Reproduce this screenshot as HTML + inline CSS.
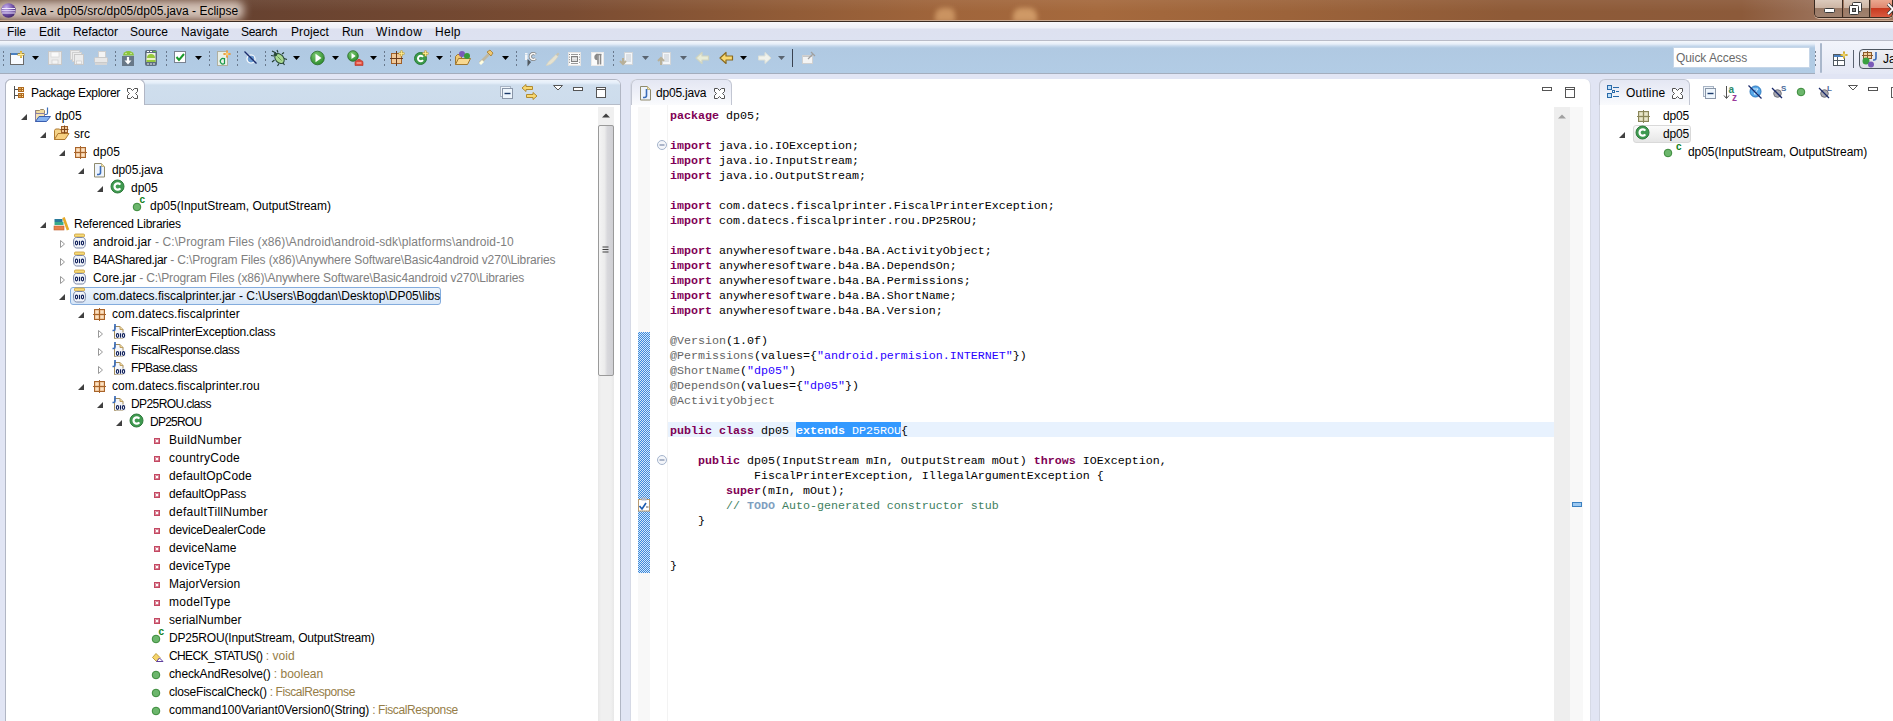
<!DOCTYPE html><html><head><meta charset="utf-8"><style>
*{margin:0;padding:0;box-sizing:border-box}
html,body{width:1893px;height:721px;overflow:hidden;background:#e1e5f4;font-family:"Liberation Sans",sans-serif;font-size:12px;color:#000}
.a{position:absolute}
.t{position:absolute;white-space:pre;line-height:18px;height:18px}
.c{position:absolute;white-space:pre;font-family:"Liberation Mono",monospace;font-size:11.665px;line-height:15px;height:15px;color:#000}
.k{color:#7f0055;font-weight:bold}
.s{color:#2a00ff}
.an{color:#646464}
.cm{color:#3f7f5f}
.td{color:#7f9fbf;font-weight:bold}
.q{color:#808080}
.r{color:#957d47}
svg{position:absolute;overflow:visible}
</style></head><body>

<div class="a" style="left:0;top:0;width:1893px;height:22px;background:linear-gradient(90deg,#5e3e2c 0%,#674230 13%,#7a4c32 30%,#925c37 42%,#a0653b 50%,#a5693d 58%,#9c633a 68%,#8e5a37 80%,#8c5a3a 92%,#9a7058 96%,#a07a62 100%)"></div>
<div class="a" style="left:0;top:0;width:1893px;height:12px;background:linear-gradient(rgba(255,255,255,0.06),rgba(255,255,255,0))"></div>
<div class="a" style="left:-6px;top:1px;width:250px;height:19px;background:rgba(236,222,212,0.82);filter:blur(4px);border-radius:8px"></div>
<div class="a" style="left:1013px;top:8px;width:24px;height:14px;background:rgba(236,186,130,0.6);filter:blur(2.5px);border-radius:8px 8px 0 0"></div>
<div class="a" style="left:935px;top:8px;width:20px;height:14px;background:rgba(236,186,130,0.55);filter:blur(2.5px);border-radius:8px 6px 0 0"></div>
<div class="a" style="left:0;top:20px;width:1893px;height:1px;background:#c8a890"></div>
<div class="a" style="left:0;top:21px;width:1893px;height:1px;background:#3b2b22"></div>
<svg style="left:1px;top:3px" width="16" height="16" viewBox="0 0 16 16"><defs><radialGradient id="eg" cx="0.35" cy="0.3" r="0.8"><stop offset="0" stop-color="#c8b0f0"/><stop offset="0.6" stop-color="#6a4aa0"/><stop offset="1" stop-color="#3a2060"/></radialGradient></defs><circle cx="7.5" cy="7.5" r="7.3" fill="url(#eg)"/><path d="M1 5.5h13M0.5 7.8h14M1 10h13" stroke="#f0e8ff" stroke-width="1.1"/></svg>
<div class="t" style="left:21px;top:2px;letter-spacing:0.009px;">Java - dp05/src/dp05/dp05.java - Eclipse</div>
<div class="a" style="left:1814px;top:0px;width:79px;height:18px;border:1px solid #3a2a20;border-top:none;border-radius:0 0 5px 5px;overflow:hidden;box-shadow:0 1px 0 rgba(255,230,210,0.6)"><div class="a" style="left:0;top:0;width:28px;height:17px;background:linear-gradient(#dccabc 0,#cdb5a4 45%,#9a7a66 50%,#a08270 100%);border-right:1px solid #3a2a20"></div><div class="a" style="left:29px;top:0;width:26px;height:17px;background:linear-gradient(#dccabc 0,#cdb5a4 45%,#9a7a66 50%,#a08270 100%);border-right:1px solid #3a2a20"></div><div class="a" style="left:56px;top:0;width:30px;height:17px;background:linear-gradient(#eaa890 0,#e08870 45%,#c83a20 50%,#d85a40 100%)"></div></div><svg style="left:1824px;top:8px" width="12" height="6" viewBox="0 0 12 6"><rect x="0.5" y="0.5" width="10" height="4" rx="1" fill="#fff" stroke="#3a3a3a"/></svg><svg style="left:1849px;top:2px" width="14" height="13" viewBox="0 0 14 13"><rect x="3.5" y="0.5" width="9" height="9" rx="1" fill="#fff" stroke="#3a3a3a"/><rect x="0.5" y="3.5" width="9" height="9" rx="1" fill="#fff" stroke="#3a3a3a"/><rect x="3.5" y="6.5" width="3" height="3" fill="#888" stroke="#3a3a3a"/></svg><svg style="left:1888px;top:3px" width="6" height="12" viewBox="0 0 6 12"><path d="M0 1l5 5l-5 5" stroke="#3a3a3a" stroke-width="3.4" fill="none"/><path d="M0 1l5 5l-5 5" stroke="#fff" stroke-width="1.8" fill="none"/></svg>
<div class="a" style="left:0;top:22px;width:1893px;height:18px;background:linear-gradient(#f7f8fc 0,#eef0f8 6px,#dde1f0 7px,#dde2f1 100%)"></div>
<div class="a" style="left:0;top:40px;width:1893px;height:1px;background:#b9bcc8"></div>
<div class="t" style="left:7px;top:23px;letter-spacing:-0.115px;">File</div>
<div class="t" style="left:39px;top:23px;letter-spacing:0.105px;">Edit</div>
<div class="t" style="left:73px;top:23px;letter-spacing:-0.066px;">Refactor</div>
<div class="t" style="left:130px;top:23px;letter-spacing:-0.005px;">Source</div>
<div class="t" style="left:181px;top:23px;letter-spacing:0.104px;">Navigate</div>
<div class="t" style="left:241px;top:23px;letter-spacing:-0.305px;">Search</div>
<div class="t" style="left:291px;top:23px;letter-spacing:0.091px;">Project</div>
<div class="t" style="left:342px;top:23px;letter-spacing:-0.160px;">Run</div>
<div class="t" style="left:376px;top:23px;letter-spacing:0.662px;">Window</div>
<div class="t" style="left:435px;top:23px;letter-spacing:0.271px;">Help</div>
<div class="a" style="left:0;top:41px;width:1815px;height:32px;background:linear-gradient(#f4f7fc 0,#e6eef8 3px,#c6d8ec 5px,#b0c9e2 7px,#b2cce5 100%)"></div>
<div class="a" style="left:0;top:73px;width:1815px;height:1px;background:#a3adbd"></div>
<div class="a" style="left:1815px;top:41px;width:78px;height:33px;background:linear-gradient(#f2f4fb,#e4e8f5)"></div>
<div class="a" style="left:1820px;top:43px;width:2px;height:30px;background:#a9b7cb;border-radius:1px"></div>
<svg style="left:2px;top:50px" width="3" height="17" viewBox="0 0 3 17"><rect x="1" y="1" width="1" height="2" fill="#4a5668" opacity="0.7"/><rect x="1" y="5" width="1" height="2" fill="#4a5668" opacity="0.7"/><rect x="1" y="9" width="1" height="2" fill="#4a5668" opacity="0.7"/><rect x="1" y="14" width="1" height="2" fill="#4a5668" opacity="0.7"/></svg>
<svg style="left:114px;top:50px" width="3" height="17" viewBox="0 0 3 17"><rect x="1" y="1" width="1" height="2" fill="#4a5668" opacity="0.7"/><rect x="1" y="5" width="1" height="2" fill="#4a5668" opacity="0.7"/><rect x="1" y="9" width="1" height="2" fill="#4a5668" opacity="0.7"/><rect x="1" y="14" width="1" height="2" fill="#4a5668" opacity="0.7"/></svg>
<svg style="left:165px;top:50px" width="3" height="17" viewBox="0 0 3 17"><rect x="1" y="1" width="1" height="2" fill="#4a5668" opacity="0.7"/><rect x="1" y="5" width="1" height="2" fill="#4a5668" opacity="0.7"/><rect x="1" y="9" width="1" height="2" fill="#4a5668" opacity="0.7"/><rect x="1" y="14" width="1" height="2" fill="#4a5668" opacity="0.7"/></svg>
<svg style="left:208px;top:50px" width="3" height="17" viewBox="0 0 3 17"><rect x="1" y="1" width="1" height="2" fill="#4a5668" opacity="0.7"/><rect x="1" y="5" width="1" height="2" fill="#4a5668" opacity="0.7"/><rect x="1" y="9" width="1" height="2" fill="#4a5668" opacity="0.7"/><rect x="1" y="14" width="1" height="2" fill="#4a5668" opacity="0.7"/></svg>
<svg style="left:236px;top:50px" width="3" height="17" viewBox="0 0 3 17"><rect x="1" y="1" width="1" height="2" fill="#4a5668" opacity="0.7"/><rect x="1" y="5" width="1" height="2" fill="#4a5668" opacity="0.7"/><rect x="1" y="9" width="1" height="2" fill="#4a5668" opacity="0.7"/><rect x="1" y="14" width="1" height="2" fill="#4a5668" opacity="0.7"/></svg>
<svg style="left:264px;top:50px" width="3" height="17" viewBox="0 0 3 17"><rect x="1" y="1" width="1" height="2" fill="#4a5668" opacity="0.7"/><rect x="1" y="5" width="1" height="2" fill="#4a5668" opacity="0.7"/><rect x="1" y="9" width="1" height="2" fill="#4a5668" opacity="0.7"/><rect x="1" y="14" width="1" height="2" fill="#4a5668" opacity="0.7"/></svg>
<svg style="left:383px;top:50px" width="3" height="17" viewBox="0 0 3 17"><rect x="1" y="1" width="1" height="2" fill="#4a5668" opacity="0.7"/><rect x="1" y="5" width="1" height="2" fill="#4a5668" opacity="0.7"/><rect x="1" y="9" width="1" height="2" fill="#4a5668" opacity="0.7"/><rect x="1" y="14" width="1" height="2" fill="#4a5668" opacity="0.7"/></svg>
<svg style="left:449px;top:50px" width="3" height="17" viewBox="0 0 3 17"><rect x="1" y="1" width="1" height="2" fill="#4a5668" opacity="0.7"/><rect x="1" y="5" width="1" height="2" fill="#4a5668" opacity="0.7"/><rect x="1" y="9" width="1" height="2" fill="#4a5668" opacity="0.7"/><rect x="1" y="14" width="1" height="2" fill="#4a5668" opacity="0.7"/></svg>
<svg style="left:515px;top:50px" width="3" height="17" viewBox="0 0 3 17"><rect x="1" y="1" width="1" height="2" fill="#4a5668" opacity="0.7"/><rect x="1" y="5" width="1" height="2" fill="#4a5668" opacity="0.7"/><rect x="1" y="9" width="1" height="2" fill="#4a5668" opacity="0.7"/><rect x="1" y="14" width="1" height="2" fill="#4a5668" opacity="0.7"/></svg>
<svg style="left:612px;top:50px" width="3" height="17" viewBox="0 0 3 17"><rect x="1" y="1" width="1" height="2" fill="#4a5668" opacity="0.7"/><rect x="1" y="5" width="1" height="2" fill="#4a5668" opacity="0.7"/><rect x="1" y="9" width="1" height="2" fill="#4a5668" opacity="0.7"/><rect x="1" y="14" width="1" height="2" fill="#4a5668" opacity="0.7"/></svg>
<svg style="left:1814px;top:50px" width="3" height="17" viewBox="0 0 3 17"><rect x="1" y="1" width="1" height="2" fill="#4a5668" opacity="0.7"/><rect x="1" y="5" width="1" height="2" fill="#4a5668" opacity="0.7"/><rect x="1" y="9" width="1" height="2" fill="#4a5668" opacity="0.7"/><rect x="1" y="14" width="1" height="2" fill="#4a5668" opacity="0.7"/></svg>
<svg style="left:32px;top:56px" width="8" height="5" viewBox="0 0 8 5"><path d="M0 0h7l-3.5 4z" fill="#000"/></svg>
<svg style="left:195px;top:56px" width="8" height="5" viewBox="0 0 8 5"><path d="M0 0h7l-3.5 4z" fill="#000"/></svg>
<svg style="left:293px;top:56px" width="8" height="5" viewBox="0 0 8 5"><path d="M0 0h7l-3.5 4z" fill="#000"/></svg>
<svg style="left:332px;top:56px" width="8" height="5" viewBox="0 0 8 5"><path d="M0 0h7l-3.5 4z" fill="#000"/></svg>
<svg style="left:370px;top:56px" width="8" height="5" viewBox="0 0 8 5"><path d="M0 0h7l-3.5 4z" fill="#000"/></svg>
<svg style="left:436px;top:56px" width="8" height="5" viewBox="0 0 8 5"><path d="M0 0h7l-3.5 4z" fill="#000"/></svg>
<svg style="left:502px;top:56px" width="8" height="5" viewBox="0 0 8 5"><path d="M0 0h7l-3.5 4z" fill="#000"/></svg>
<svg style="left:642px;top:56px" width="8" height="5" viewBox="0 0 8 5"><path d="M0 0h7l-3.5 4z" fill="#5a6470"/></svg>
<svg style="left:680px;top:56px" width="8" height="5" viewBox="0 0 8 5"><path d="M0 0h7l-3.5 4z" fill="#5a6470"/></svg>
<svg style="left:740px;top:56px" width="8" height="5" viewBox="0 0 8 5"><path d="M0 0h7l-3.5 4z" fill="#000"/></svg>
<svg style="left:778px;top:56px" width="8" height="5" viewBox="0 0 8 5"><path d="M0 0h7l-3.5 4z" fill="#5a6470"/></svg>
<svg style="left:10px;top:50px" width="16" height="16" viewBox="0 0 16 16"><rect x="0.5" y="3.5" width="13" height="11" fill="#f8fbff" stroke="#6a6a6a"/><rect x="1" y="3" width="7" height="2" fill="#4a80c0"/><path d="M11 1v7M7.5 4.5h7" stroke="#c89a20" stroke-width="2"/><path d="M11 1.5v6M8 4.5h6" stroke="#fff0a0" stroke-width="1"/></svg>
<svg style="left:48px;top:50px" width="16" height="16" viewBox="0 0 16 16"><rect x="0.5" y="1.5" width="13" height="13" fill="#ececec" stroke="#c8c8c8"/><rect x="3" y="2" width="8" height="5" fill="#fafafa" stroke="#d0d0d0" stroke-width="0.6"/><rect x="4" y="10" width="6" height="4" fill="#f4f4f4" stroke="#c8c8c8" stroke-width="0.6"/></svg>
<svg style="left:70px;top:50px" width="16" height="16" viewBox="0 0 16 16"><rect x="0.5" y="0.5" width="9" height="9" fill="#ececec" stroke="#d0d0d0"/><rect x="2.5" y="2.5" width="9" height="9" fill="#ececec" stroke="#d0d0d0"/><rect x="4.5" y="4.5" width="9" height="10" fill="#ececec" stroke="#c8c8c8"/><rect x="6.5" y="11" width="5" height="3" fill="#f6f6f6" stroke="#c8c8c8" stroke-width="0.6"/></svg>
<svg style="left:94px;top:50px" width="16" height="16" viewBox="0 0 16 16"><rect x="4.5" y="1.5" width="7" height="6" fill="#f4f4f4" stroke="#cfcfcf"/><rect x="0.5" y="7.5" width="13" height="5" rx="1" fill="#e8e8e8" stroke="#cacaca"/><rect x="1" y="13" width="12" height="2" fill="#d6d6d6"/></svg>
<svg style="left:122px;top:50px" width="16" height="16" viewBox="0 0 16 16"><path d="M1 5.5a5.5 4.5 0 0 1 11 0z" fill="#8ac43a"/><circle cx="4" cy="3.5" r="0.7" fill="#e8f4d0"/><circle cx="9" cy="3.5" r="0.7" fill="#e8f4d0"/><rect x="0" y="6" width="12" height="10" fill="#687888"/><path d="M6 7v6" stroke="#fff" stroke-width="2.2"/><path d="M2.5 10.5l3.5 4l3.5-4z" fill="#fff"/></svg>
<svg style="left:145px;top:50px" width="16" height="16" viewBox="0 0 16 16"><rect x="0" y="0" width="12" height="16" rx="2" fill="#5e6e80"/><rect x="1.5" y="3" width="9" height="9" fill="#f0f4e8"/><path d="M2 8a4 4 0 0 1 8 0z" fill="#96c83c"/><rect x="1.5" y="8.5" width="9" height="1.2" fill="#e8f4b0"/><rect x="1.5" y="10" width="9" height="2" fill="#96c83c"/><rect x="2" y="1" width="2" height="1" fill="#fff"/><rect x="5" y="1" width="2" height="1" fill="#fff"/><rect x="8" y="1" width="3" height="1" fill="#6ac04a"/><circle cx="3" cy="14" r="0.8" fill="#fff"/><circle cx="6" cy="14" r="0.8" fill="#fff"/><circle cx="9" cy="14" r="0.8" fill="#fff"/></svg>
<svg style="left:174px;top:50px" width="16" height="16" viewBox="0 0 16 16"><rect x="0.5" y="1.5" width="11" height="11" fill="#fff" stroke="#7a8290"/><path d="M2.5 7l2.5 3l5-6" stroke="#1a9a2a" stroke-width="2" fill="none"/></svg>
<svg style="left:217px;top:50px" width="16" height="16" viewBox="0 0 16 16"><rect x="0.5" y="1.5" width="10" height="14" fill="#eaf0e8" stroke="#b0b0a0"/><path d="M7.5 9A2.7 2.7 0 1 0 7.5 13.5V8" fill="none" stroke="#1a9a4a" stroke-width="1.2"/><path d="M10 0.5v7M6.5 4h7" stroke="#e8902a" stroke-width="2"/><path d="M10 1.5v5M7.5 4h5" stroke="#fff0b0" stroke-width="0.8"/></svg>
<svg style="left:244px;top:50px" width="16" height="16" viewBox="0 0 16 16"><circle cx="7" cy="9" r="4" fill="#6a9ad0" stroke="#fff" stroke-width="1.2"/><path d="M0.5 1.5l12 12" stroke="#1a2a6a" stroke-width="1.3"/></svg>
<svg style="left:271px;top:50px" width="17" height="17" viewBox="0 0 17 17"><path d="M5 3L1 1M7 2.5L6 0M3 6L0 5.5M3.5 10L1 12M8 13.5L6.5 16M11.5 12l2 3M13 8.5l3 1M11 4l2-1.5" stroke="#203a30" stroke-width="1.1"/><ellipse cx="8.5" cy="8.5" rx="4" ry="5.6" transform="rotate(-40 8.5 8.5)" fill="#a8d890" stroke="#2a4a38" stroke-width="1"/><path d="M6.5 6.5l4 4" stroke="#5a8a50" stroke-width="0.9"/><circle cx="4.5" cy="4.5" r="1.8" fill="#2a4a38"/></svg>
<svg style="left:310px;top:50px" width="16" height="16" viewBox="0 0 16 16"><defs><radialGradient id="rg" cx="0.4" cy="0.3" r="0.75"><stop offset="0" stop-color="#7ac870"/><stop offset="1" stop-color="#2a8a2a"/></radialGradient></defs><circle cx="7.5" cy="8" r="6.8" fill="url(#rg)" stroke="#2a6a2a" stroke-width="0.8"/><path d="M5.5 3.8v8.4l6-4.2z" fill="#fff"/></svg>
<svg style="left:347px;top:50px" width="17" height="16" viewBox="0 0 17 16"><defs><radialGradient id="rg2" cx="0.4" cy="0.3" r="0.75"><stop offset="0" stop-color="#7ac870"/><stop offset="1" stop-color="#2a8a2a"/></radialGradient></defs><circle cx="6" cy="6" r="5.3" fill="url(#rg2)" stroke="#2a6a2a" stroke-width="0.8"/><path d="M4.5 3v6l4.2-3z" fill="#fff"/><path d="M8 15.5v-3a2 2 0 0 1 2-2h4a2 2 0 0 1 2 2v3z" fill="#e04a3a" stroke="#b03020" stroke-width="0.6"/><rect x="9.5" y="12.5" width="5" height="1" fill="#ffd0c8"/><rect x="10.5" y="9" width="3" height="1.5" fill="#d04030"/></svg>
<svg style="left:390px;top:50px" width="16" height="16" viewBox="0 0 16 16"><rect x="1.5" y="3.5" width="10" height="10" fill="#f0c898" stroke="#a0602a"/><path d="M6.5 1v15M0 8.5h13" stroke="#6a3a1a" stroke-width="1"/><path d="M11.5 0.5v6M8.5 3.5h6" stroke="#c8a020" stroke-width="2"/><path d="M11.5 1v5M9 3.5h5" stroke="#fff0a0" stroke-width="0.8"/></svg>
<svg style="left:414px;top:50px" width="16" height="16" viewBox="0 0 16 16"><circle cx="6.5" cy="8.5" r="6" fill="#3a9a4a" stroke="#2a7a3a"/><path d="M9 6.8A2.8 2.8 0 1 0 9 10.2" fill="none" stroke="#fff" stroke-width="2"/><path d="M11.5 0.5v6M8.5 3.5h6" stroke="#c8a020" stroke-width="2"/><path d="M11.5 1v5M9 3.5h5" stroke="#fff0a0" stroke-width="0.8"/></svg>
<svg style="left:455px;top:50px" width="17" height="16" viewBox="0 0 17 16"><path d="M0.5 6.5l2-2h4v10h-6z" fill="#f0c870" stroke="#a07830"/><path d="M0.5 14.5l3-6h12l-3 6z" fill="#f8d890" stroke="#a07830"/><circle cx="7" cy="4" r="3" fill="#7a5ab8"/><circle cx="12" cy="6" r="3" fill="#3a9a3a"/></svg>
<svg style="left:478px;top:50px" width="17" height="16" viewBox="0 0 17 16"><path d="M3 14l-2-2l9-9l2 2z" fill="#c0b8a0"/><path d="M9 2l3-2l3 3l-2 3z" fill="#f0c870" stroke="#a07830" stroke-width="0.8"/><path d="M1 13l3-3l2 2l-3 3z" fill="#fffde0"/></svg>
<svg style="left:523px;top:51px" width="16" height="16" viewBox="0 0 16 16"><rect x="2" y="4" width="2.5" height="5" fill="#f4f6f8"/><rect x="2" y="2" width="2.5" height="1.5" fill="#f4f6f8"/><path d="M4.5 8v7.5l3.5-4.5z" fill="#50585f"/><path d="M12.5 3.5a3 3 0 1 0 0 4" fill="none" stroke="#7a7a7a" stroke-width="3"/><path d="M12.5 3.5a3 3 0 1 0 0 4" fill="none" stroke="#f8f8f8" stroke-width="1.6"/></svg>
<svg style="left:545px;top:51px" width="16" height="16" viewBox="0 0 16 16"><path d="M1 14.5q5 0 9-5l3-4l-2-2l-3 3q-5 4-7 8z" fill="#e6e2d0" stroke="#d4d0bc" stroke-width="0.6"/><path d="M11 3.5l2-2l1.5 1.5l-2 2z" fill="#c8c4b0"/></svg>
<svg style="left:568px;top:52px" width="16" height="16" viewBox="0 0 16 16"><rect x="0.5" y="0.5" width="12" height="13" fill="#fbfbfb" stroke="#e4e4e4"/><path d="M3 2.5h7M3 11.5h7" stroke="#9a9a9a"/><rect x="3.5" y="4.5" width="6" height="5" fill="#d0d0d0" stroke="#808080"/><path d="M4 6.5h5M4 8h5" stroke="#f0f0f0" stroke-width="0.8"/><path d="M1.5 2v10M11.5 2v10" stroke="#8a8a8a" stroke-dasharray="1 1.6"/></svg>
<svg style="left:591px;top:52px" width="16" height="16" viewBox="0 0 16 16"><rect x="0.5" y="0.5" width="12" height="13" fill="#fbfbfb" stroke="#eaeaea"/><path d="M5 2.5h5.5" stroke="#8a8a8a" stroke-width="1.4"/><path d="M6.5 2.5a2.5 2.5 0 0 0 0 5" fill="#8a8a8a" stroke="#8a8a8a" stroke-width="1.4"/><path d="M7 2.5v10M9.5 2.5v10" stroke="#8a8a8a" stroke-width="1.6"/></svg>
<svg style="left:620px;top:50px" width="16" height="16" viewBox="0 0 16 16"><rect x="4.5" y="2.5" width="8" height="12" fill="#f4f6f8" stroke="#d0d4d8"/><path d="M6 5h5M6 7h5M6 9h5M6 11h5" stroke="#b8c0c8" stroke-width="0.8"/><path d="M3 14v-6M0 11l3 3l3-3" stroke="#b8b098" stroke-width="2" fill="none"/></svg>
<svg style="left:658px;top:50px" width="16" height="16" viewBox="0 0 16 16"><rect x="4.5" y="2.5" width="8" height="12" fill="#f4f6f8" stroke="#d0d4d8"/><path d="M6 5h5M6 7h5M6 9h5M6 11h5" stroke="#b8c0c8" stroke-width="0.8"/><path d="M3 15v-7M0 11l3-3l3 3" stroke="#b8b098" stroke-width="2" fill="none"/></svg>
<svg style="left:695px;top:50px" width="16" height="16" viewBox="0 0 16 16"><path d="M1 8l6-5.5v3.5h6.5v4h-6.5v3.5z" fill="#e8ecd8" stroke="#d0d4c0" stroke-width="1.2" stroke-linejoin="round"/></svg>
<svg style="left:719px;top:50px" width="16" height="16" viewBox="0 0 16 16"><path d="M1 8l6-5.5v3.5h6.5v4h-6.5v3.5z" fill="#f8d870" stroke="#8a6a20" stroke-width="1.2" stroke-linejoin="round"/></svg>
<svg style="left:757px;top:50px" width="16" height="16" viewBox="0 0 16 16"><path d="M14 8l-6-5.5v3.5h-6.5v4h6.5v3.5z" fill="#f0f2ec" stroke="#dce0d8" stroke-width="1"/></svg>
<div class="a" style="left:792px;top:49px;width:1px;height:18px;background:#3a4250"></div>
<svg style="left:802px;top:50px" width="16" height="16" viewBox="0 0 16 16"><rect x="0.5" y="5.5" width="10" height="8" fill="#f4f4f4" stroke="#d0d0d0"/><rect x="1" y="6" width="9" height="1" fill="#c8c8c8"/><path d="M6 9l5-5M9 2l4 4" stroke="#a0a0a0" stroke-width="1.2"/></svg>
<div class="a" style="left:1673px;top:47px;width:137px;height:21px;background:#fff;border:1px solid #c6d6e8"></div>
<div class="t" style="left:1676px;top:49px;color:#6a6a6a;letter-spacing:-0.076px;">Quick Access</div>
<svg style="left:1833px;top:51px" width="16" height="16" viewBox="0 0 16 16"><rect x="0.5" y="3.5" width="11" height="11" fill="#fff" stroke="#505860"/><rect x="1" y="4" width="10" height="2" fill="#4a80c0"/><path d="M4.5 6v8M1 9.5h10" stroke="#505860"/><path d="M11 0.5v7M7.5 4h7" stroke="#c8a020" stroke-width="2"/><path d="M11 1.5v5M8.5 4h5" stroke="#fff0a0" stroke-width="0.8"/></svg>
<div class="a" style="left:1853px;top:50px;width:1px;height:18px;background:#5a6270"></div>
<div class="a" style="left:1859px;top:49px;width:50px;height:20px;border:1px solid #4e5660;border-radius:4px;background:linear-gradient(#eef0f4,#dcdfe6)"></div>
<svg style="left:1862px;top:51px" width="16" height="16" viewBox="0 0 16 16"><rect x="1.5" y="1.5" width="8" height="6" fill="#f4d0a0" stroke="#8a5a2a"/><path d="M5.5 0v9M0 4.5h11" stroke="#8a5a2a"/><path d="M14 1v6q0 2-2 2h-1" fill="none" stroke="#3a6cb8" stroke-width="1.6"/><circle cx="4" cy="10" r="3.5" fill="#3aa040"/><circle cx="9" cy="13.5" r="3" fill="#7a5ab8"/></svg>
<div class="t" style="left:1883px;top:50px;">Java</div>
<div class="a" style="left:5px;top:79px;width:616px;height:660px;background:#fff;border:1px solid #b1b6c4;border-radius:6px 6px 0 0"></div>
<div class="a" style="left:6px;top:80px;width:614px;height:24px;background:linear-gradient(#eef4fb 0,#e4eef9 3px,#cfdeed 5px,#cddcec 100%);border-radius:5px 5px 0 0"></div>
<div class="a" style="left:6px;top:104px;width:614px;height:1px;background:#b5bcc8"></div>
<div class="a" style="left:5px;top:79px;width:140px;height:26px;background:#fff;border:1px solid #b1b6c4;border-bottom:none;border-radius:6px 6px 0 0"></div>
<svg style="left:13px;top:85px" width="12" height="15" viewBox="0 0 12 15"><path d="M1.5 1v13M1.5 4.5h4M1.5 10.5h4" stroke="#505050"/><rect x="5" y="2" width="6" height="5" fill="#b06a20"/><rect x="5" y="8" width="6" height="5" fill="#b06a20"/><path d="M6.5 3.5h1M9 3.5h1M6.5 5.5h1M9 5.5h1M6.5 9.5h1M9 9.5h1M6.5 11.5h1M9 11.5h1" stroke="#ffe8a0"/></svg>
<div class="t" style="left:31px;top:84px;letter-spacing:-0.369px;">Package Explorer</div>
<svg style="left:127px;top:88px" width="11" height="11" viewBox="0 0 11 11"><path d="M0.5 0.5H3.5L5.5 2.5L7.5 0.5H10.5V3.5L8.5 5.5L10.5 7.5V10.5H7.5L5.5 8.5L3.5 10.5H0.5V7.5L2.5 5.5L0.5 3.5Z" fill="#fff" stroke="#505050" stroke-width="1"/></svg>
<svg style="left:500px;top:86px" width="14" height="14" viewBox="0 0 14 14"><rect x="0.5" y="0.5" width="10" height="10" fill="#eef4fa" stroke="#a8b4c4"/><rect x="2.5" y="2.5" width="10" height="10" fill="#eef6fd" stroke="#8a96a8"/><path d="M4.5 7.5h6" stroke="#1a3a6a" stroke-width="1.4"/></svg>
<svg style="left:521px;top:84px" width="17" height="17" viewBox="0 0 17 17"><path d="M1 4l4-3.5v2h6.5v3h-6.5v2z" fill="#f8d870" stroke="#b08a30" stroke-linejoin="round"/><path d="M16 12l-4-3.5v2h-6.5v3h6.5v2z" fill="#f8d870" stroke="#b08a30" stroke-linejoin="round"/></svg>
<svg style="left:553px;top:85px" width="11" height="6" viewBox="0 0 11 6"><path d="M0.5 0.5h9l-4.5 4.5z" fill="#fff" stroke="#555"/></svg>
<svg style="left:573px;top:87px" width="11" height="5" viewBox="0 0 11 5"><rect x="0.5" y="0.5" width="9" height="3" fill="#fff" stroke="#555"/></svg>
<svg style="left:596px;top:87px" width="11" height="11" viewBox="0 0 11 11"><rect x="0.5" y="0.5" width="9" height="10" fill="#fff" stroke="#555"/><path d="M0 2.5h10" stroke="#555"/></svg>
<div class="a" style="left:598px;top:107px;width:16px;height:614px;background:linear-gradient(90deg,#e8e8e8,#f0f0f0 20%,#f0f0f0 80%,#e8e8e8)"></div>
<div class="a" style="left:598px;top:107px;width:16px;height:18px;background:#f0f0f0"></div>
<svg style="left:602px;top:113px" width="8" height="5"><path d="M0 4.5L4 0.5L8 4.5z" fill="#404040"/></svg>
<div class="a" style="left:598px;top:125px;width:16px;height:251px;border:1px solid #9a9a9a;border-radius:2px;background:linear-gradient(90deg,#f4f4f4 0,#ececec 40%,#d8d8dc 60%,#d0d0d4 100%)"></div>
<svg style="left:602px;top:246px" width="8" height="8"><path d="M0.5 1h6M0.5 3.5h6M0.5 6h6" stroke="#404040" stroke-width="1.2"/></svg>
<div class="a" style="left:630px;top:79px;width:961px;height:660px;background:#fff;border-radius:6px 6px 0 0;border-left:1px solid #d6dae6;border-right:1px solid #d6dae6"></div>
<div class="a" style="left:631px;top:79px;width:101px;height:26px;background:linear-gradient(#e4e7f3,#eef0f8 50%,#fafbfd);border:1px solid #c2c6d2;border-bottom:none;border-radius:6px 6px 0 0"></div>
<svg style="left:637px;top:84px" width="16" height="16" viewBox="0 0 16 16"><path d="M3.5 2.5h7l3 3v10.5h-10z" fill="#eef4fc" stroke="#8f8a6c"/><path d="M10.5 2.5v3h3" fill="#f3e3b0" stroke="#c8b880"/><path d="M9.5 5v6.5q0 2-2 2h-1.5" fill="none" stroke="#3a6cb8" stroke-width="1.6"/></svg>
<div class="t" style="left:656px;top:84px;letter-spacing:-0.207px;">dp05.java</div>
<svg style="left:714px;top:88px" width="11" height="11" viewBox="0 0 11 11"><path d="M0.5 0.5H3.5L5.5 2.5L7.5 0.5H10.5V3.5L8.5 5.5L10.5 7.5V10.5H7.5L5.5 8.5L3.5 10.5H0.5V7.5L2.5 5.5L0.5 3.5Z" fill="#fff" stroke="#505050" stroke-width="1"/></svg>
<svg style="left:1542px;top:87px" width="11" height="5" viewBox="0 0 11 5"><rect x="0.5" y="0.5" width="9" height="3" fill="#fff" stroke="#555"/></svg>
<svg style="left:1565px;top:87px" width="11" height="11" viewBox="0 0 11 11"><rect x="0.5" y="0.5" width="9" height="10" fill="#fff" stroke="#555"/><path d="M0 2.5h10" stroke="#555"/></svg>
<div class="a" style="left:1599px;top:79px;width:300px;height:660px;background:#fff;border-radius:6px 0 0 0;border-left:1px solid #d0d4e0"></div>
<div class="a" style="left:1599px;top:79px;width:91px;height:26px;background:linear-gradient(#e4e7f3,#eef0f8 50%,#fafbfd);border:1px solid #c2c6d2;border-bottom:none;border-radius:6px 6px 0 0"></div>
<svg style="left:1606px;top:84px" width="15" height="16" viewBox="0 0 15 16"><rect x="1.5" y="1.5" width="4" height="4" fill="#c0e0f8" stroke="#2a6aa8"/><rect x="1.5" y="9.5" width="4" height="4" fill="#c0e0f8" stroke="#2a6aa8"/><rect x="6.5" y="6.5" width="2" height="2" fill="#fff" stroke="#2a6aa8"/><path d="M7 3.5h6M10 7.5h3M7 12.5h6" stroke="#2a6aa8"/></svg>
<div class="t" style="left:1626px;top:84px;letter-spacing:0.194px;">Outline</div>
<svg style="left:1672px;top:88px" width="11" height="11" viewBox="0 0 11 11"><path d="M0.5 0.5H3.5L5.5 2.5L7.5 0.5H10.5V3.5L8.5 5.5L10.5 7.5V10.5H7.5L5.5 8.5L3.5 10.5H0.5V7.5L2.5 5.5L0.5 3.5Z" fill="#fff" stroke="#505050" stroke-width="1"/></svg>
<svg style="left:1703px;top:86px" width="14" height="14" viewBox="0 0 14 14"><rect x="0.5" y="0.5" width="10" height="10" fill="#eef4fa" stroke="#a8b4c4"/><rect x="2.5" y="2.5" width="10" height="10" fill="#eef6fd" stroke="#8a96a8"/><path d="M4.5 7.5h6" stroke="#1a3a6a" stroke-width="1.4"/></svg>
<svg style="left:1723px;top:84px" width="17" height="17" viewBox="0 0 17 17"><path d="M3.5 2v12M1 11.5l2.5 3l2.5-3" stroke="#505050" fill="none"/><text x="5.5" y="8.5" font-family="Liberation Sans" font-size="10" font-weight="bold" fill="#2a8a6a">a</text><text x="9" y="16.5" font-family="Liberation Sans" font-size="10" font-weight="bold" fill="#9a3a9a">z</text></svg>
<svg style="left:1747px;top:84px" width="17" height="17" viewBox="0 0 17 17"><circle cx="8.5" cy="7.5" r="5.5" fill="#58a8e8" stroke="#2a78c0"/><path d="M6 5h5l-4 5h4" stroke="#d8f0ff" fill="none" stroke-width="1"/><path d="M1.5 1.5l13 13" stroke="#1a2a6a" stroke-width="1.3"/></svg>
<svg style="left:1771px;top:84px" width="17" height="17" viewBox="0 0 17 17"><circle cx="6.5" cy="9.5" r="3.8" fill="#a8a8b0" stroke="#707078"/><path d="M1 4l10 10" stroke="#1a2a6a" stroke-width="1.3"/><text x="10" y="7" font-family="Liberation Sans" font-size="8" font-weight="bold" fill="#4a6a9a">S</text></svg>
<svg style="left:1793px;top:82px" width="16" height="16" viewBox="0 0 16 16"><circle cx="8" cy="10" r="3.8" fill="#6cb66c" stroke="#3a8a3a"/></svg>
<svg style="left:1817px;top:84px" width="17" height="17" viewBox="0 0 17 17"><circle cx="7.5" cy="9.5" r="3.8" fill="#a8a8b0" stroke="#707078"/><path d="M2 4l10 10" stroke="#1a2a6a" stroke-width="1.3"/><text x="10" y="7" font-family="Liberation Sans" font-size="8" font-weight="bold" fill="#4a6a9a">L</text></svg>
<svg style="left:1848px;top:85px" width="11" height="6" viewBox="0 0 11 6"><path d="M0.5 0.5h9l-4.5 4.5z" fill="#fff" stroke="#555"/></svg>
<svg style="left:1868px;top:87px" width="11" height="5" viewBox="0 0 11 5"><rect x="0.5" y="0.5" width="9" height="3" fill="#fff" stroke="#555"/></svg>
<div class="a" style="left:1891px;top:87px;width:2px;height:11px;border:1px solid #5a5a5a;border-right:none"></div>
<svg style="left:21px;top:114px" width="6" height="6"><path d="M6 0V6H0Z" fill="#404040"/></svg>
<svg style="left:34px;top:107px" width="17" height="16" viewBox="0 0 17 16"><path d="M1.5 3.5h4l1 -1h3l1 1v3h-8.5z" fill="#f3dca0" stroke="#9a8a6a"/><path d="M1.5 3.5v11h9v-8h-9z" fill="#f6e2b0" stroke="#8a80a0" stroke-width="1"/><path d="M1.5 14.5l3.5-5h11.5l-4 5z" fill="#86b2f0" stroke="#3a5eb0"/><path d="M13.5 0.5v5.5q0 1.5-1.5 1.5h-1" fill="none" stroke="#3a6cb8" stroke-width="1.2"/></svg>
<div class="t" style="left:55px;top:107px;font-size:12px"><span style="letter-spacing:-0.034px">dp05</span></div>
<svg style="left:40px;top:132px" width="6" height="6"><path d="M6 0V6H0Z" fill="#404040"/></svg>
<svg style="left:53px;top:125px" width="17" height="16" viewBox="0 0 17 16"><path d="M1.5 5.5l1-1.5h4l1 1h4v9.5h-10z" fill="#f5d48a" stroke="#b07a30"/><path d="M1.5 14.5l3.5-6h11l-4 6z" fill="#f8d080" stroke="#b07a30"/><rect x="8.5" y="1.5" width="6" height="6" fill="#f0c898" stroke="#a0602a"/><path d="M11.5 0.5v8M7.5 4.5h8" stroke="#80481a" stroke-width="1"/></svg>
<div class="t" style="left:74px;top:125px;font-size:12px"><span style="letter-spacing:-0.048px">src</span></div>
<svg style="left:59px;top:150px" width="6" height="6"><path d="M6 0V6H0Z" fill="#404040"/></svg>
<svg style="left:72px;top:143px" width="16" height="16" viewBox="0 0 16 16"><rect x="3.5" y="4.5" width="10" height="10" fill="#e8b482" stroke="#a8642a"/><rect x="4.5" y="5.5" width="3" height="3" fill="#fae2c4"/><rect x="9.5" y="5.5" width="3" height="3" fill="#fae2c4"/><rect x="4.5" y="10.5" width="3" height="3" fill="#fae2c4"/><rect x="9.5" y="10.5" width="3" height="3" fill="#fae2c4"/><path d="M8.5 3V16M2 9.5H15" stroke="#a8642a" stroke-width="1"/></svg>
<div class="t" style="left:93px;top:143px;font-size:12px"><span style="letter-spacing:0.066px">dp05</span></div>
<svg style="left:78px;top:168px" width="6" height="6"><path d="M6 0V6H0Z" fill="#404040"/></svg>
<svg style="left:91px;top:161px" width="16" height="16" viewBox="0 0 16 16"><path d="M3.5 2.5h7l3 3v10.5h-10z" fill="#eef4fc" stroke="#8f8a6c"/><path d="M10.5 2.5v3h3" fill="#f3e3b0" stroke="#c8b880"/><path d="M9.5 5v6.5q0 2-2 2h-1.5" fill="none" stroke="#3a6cb8" stroke-width="1.6"/></svg>
<div class="t" style="left:112px;top:161px;font-size:12px"><span style="letter-spacing:-0.132px">dp05.java</span></div>
<svg style="left:97px;top:186px" width="6" height="6"><path d="M6 0V6H0Z" fill="#404040"/></svg>
<svg style="left:110px;top:179px" width="16" height="16" viewBox="0 0 16 16"><circle cx="7.5" cy="7.5" r="6.5" fill="#3f9a50" stroke="#2d7a3a"/><path d="M10.3 5.6A3.2 3.2 0 1 0 10.3 9.4" fill="none" stroke="#fff" stroke-width="2.2"/></svg>
<div class="t" style="left:131px;top:179px;font-size:12px"><span style="letter-spacing:-0.034px">dp05</span></div>
<svg style="left:129px;top:197px" width="18" height="16" viewBox="0 0 18 16"><circle cx="8" cy="10" r="3.8" fill="#6cb66c" stroke="#3a8a3a"/><text x="10.5" y="6" font-family="Liberation Sans" font-size="10" font-weight="bold" fill="#108020">c</text></svg>
<div class="t" style="left:150px;top:197px;font-size:12px"><span style="letter-spacing:-0.016px">dp05(InputStream, OutputStream)</span></div>
<svg style="left:40px;top:222px" width="6" height="6"><path d="M6 0V6H0Z" fill="#404040"/></svg>
<svg style="left:53px;top:215px" width="17" height="16" viewBox="0 0 17 16"><rect x="1.5" y="4" width="8" height="3" fill="#2a7a9a"/><rect x="1.5" y="7" width="9" height="3" fill="#3aaa8a"/><rect x="1" y="11" width="10" height="4" fill="#e8804a" stroke="#c06030" stroke-width="0.6"/><path d="M10.5 2.5l4.5 12.5" stroke="#e6aa28" stroke-width="2.6"/></svg>
<div class="t" style="left:74px;top:215px;font-size:12px"><span style="letter-spacing:-0.233px">Referenced Libraries</span></div>
<svg style="left:60px;top:240px" width="7" height="9"><path d="M0.5 0.5V7.5L4.5 4Z" fill="#fff" stroke="#999" stroke-width="1"/></svg>
<svg style="left:72px;top:233px" width="16" height="16" viewBox="0 0 16 16"><rect x="2.5" y="1" width="10" height="3" rx="1" fill="#f6da78" stroke="#c89a38" stroke-width="0.8"/><path d="M4.5 4.5h6q3 0 3 4.5q0 6-3 6h-6q-3 0-3-6q0-4.5 3-4.5z" fill="#f2f5fb" stroke="#7a86a6"/><ellipse cx="4.5" cy="10" rx="1.1" ry="1.9" fill="none" stroke="#10205a" stroke-width="1.1"/><path d="M7.5 7.8v4.4" stroke="#10205a" stroke-width="1.2"/><ellipse cx="10.5" cy="10" rx="1.1" ry="1.9" fill="none" stroke="#10205a" stroke-width="1.1"/></svg>
<div class="t" style="left:93px;top:233px;font-size:12px"><span style="letter-spacing:0.158px">android.jar</span><span class="q" style="letter-spacing:0.104px"> - C:\Program Files (x86)\Android\android-sdk\platforms\android-10</span></div>
<svg style="left:60px;top:258px" width="7" height="9"><path d="M0.5 0.5V7.5L4.5 4Z" fill="#fff" stroke="#999" stroke-width="1"/></svg>
<svg style="left:72px;top:251px" width="16" height="16" viewBox="0 0 16 16"><rect x="2.5" y="1" width="10" height="3" rx="1" fill="#f6da78" stroke="#c89a38" stroke-width="0.8"/><path d="M4.5 4.5h6q3 0 3 4.5q0 6-3 6h-6q-3 0-3-6q0-4.5 3-4.5z" fill="#f2f5fb" stroke="#7a86a6"/><ellipse cx="4.5" cy="10" rx="1.1" ry="1.9" fill="none" stroke="#10205a" stroke-width="1.1"/><path d="M7.5 7.8v4.4" stroke="#10205a" stroke-width="1.2"/><ellipse cx="10.5" cy="10" rx="1.1" ry="1.9" fill="none" stroke="#10205a" stroke-width="1.1"/></svg>
<div class="t" style="left:93px;top:251px;font-size:12px"><span style="letter-spacing:-0.314px">B4AShared.jar</span><span class="q" style="letter-spacing:-0.116px"> - C:\Program Files (x86)\Anywhere Software\Basic4android v270\Libraries</span></div>
<svg style="left:60px;top:276px" width="7" height="9"><path d="M0.5 0.5V7.5L4.5 4Z" fill="#fff" stroke="#999" stroke-width="1"/></svg>
<svg style="left:72px;top:269px" width="16" height="16" viewBox="0 0 16 16"><rect x="2.5" y="1" width="10" height="3" rx="1" fill="#f6da78" stroke="#c89a38" stroke-width="0.8"/><path d="M4.5 4.5h6q3 0 3 4.5q0 6-3 6h-6q-3 0-3-6q0-4.5 3-4.5z" fill="#f2f5fb" stroke="#7a86a6"/><ellipse cx="4.5" cy="10" rx="1.1" ry="1.9" fill="none" stroke="#10205a" stroke-width="1.1"/><path d="M7.5 7.8v4.4" stroke="#10205a" stroke-width="1.2"/><ellipse cx="10.5" cy="10" rx="1.1" ry="1.9" fill="none" stroke="#10205a" stroke-width="1.1"/></svg>
<div class="t" style="left:93px;top:269px;font-size:12px"><span style="letter-spacing:0.030px">Core.jar</span><span class="q" style="letter-spacing:-0.120px"> - C:\Program Files (x86)\Anywhere Software\Basic4android v270\Libraries</span></div>
<div class="a" style="left:70px;top:287px;width:371px;height:18px;border:1px solid #84acdd;border-radius:3px;background:linear-gradient(#eef5fd,#d6e6f8)"></div>
<svg style="left:59px;top:294px" width="6" height="6"><path d="M6 0V6H0Z" fill="#404040"/></svg>
<svg style="left:72px;top:287px" width="16" height="16" viewBox="0 0 16 16"><rect x="2.5" y="1" width="10" height="3" rx="1" fill="#f6da78" stroke="#c89a38" stroke-width="0.8"/><path d="M4.5 4.5h6q3 0 3 4.5q0 6-3 6h-6q-3 0-3-6q0-4.5 3-4.5z" fill="#f2f5fb" stroke="#7a86a6"/><ellipse cx="4.5" cy="10" rx="1.1" ry="1.9" fill="none" stroke="#10205a" stroke-width="1.1"/><path d="M7.5 7.8v4.4" stroke="#10205a" stroke-width="1.2"/><ellipse cx="10.5" cy="10" rx="1.1" ry="1.9" fill="none" stroke="#10205a" stroke-width="1.1"/></svg>
<div class="t" style="left:93px;top:287px;font-size:12px"><span style="letter-spacing:0.017px">com.datecs.fiscalprinter.jar - C:\Users\Bogdan\Desktop\DP05\libs</span></div>
<svg style="left:78px;top:312px" width="6" height="6"><path d="M6 0V6H0Z" fill="#404040"/></svg>
<svg style="left:91px;top:305px" width="16" height="16" viewBox="0 0 16 16"><rect x="3.5" y="4.5" width="10" height="10" fill="#e8b482" stroke="#a8642a"/><rect x="4.5" y="5.5" width="3" height="3" fill="#fae2c4"/><rect x="9.5" y="5.5" width="3" height="3" fill="#fae2c4"/><rect x="4.5" y="10.5" width="3" height="3" fill="#fae2c4"/><rect x="9.5" y="10.5" width="3" height="3" fill="#fae2c4"/><path d="M8.5 3V16M2 9.5H15" stroke="#a8642a" stroke-width="1"/></svg>
<div class="t" style="left:112px;top:305px;font-size:12px"><span style="letter-spacing:0.071px">com.datecs.fiscalprinter</span></div>
<svg style="left:98px;top:330px" width="7" height="9"><path d="M0.5 0.5V7.5L4.5 4Z" fill="#fff" stroke="#999" stroke-width="1"/></svg>
<svg style="left:110px;top:323px" width="17" height="16" viewBox="0 0 17 16"><path d="M4.5 3.5h5.5l3 3v9h-8.5z" fill="#f4f6fb" stroke="#a08a5a"/><path d="M10 3.5v3h3" fill="#f0d8a0" stroke="#c0a060"/><path d="M5 1v5q0 1.5-1.5 1.5h-1" fill="none" stroke="#3a6cb8" stroke-width="1.7"/><rect x="5.5" y="9.5" width="10.5" height="6" fill="#f4f6fb"/><ellipse cx="7.5" cy="12.5" rx="1.1" ry="1.9" fill="none" stroke="#10205a" stroke-width="1.1"/><path d="M10.5 10.3v4.4" stroke="#10205a" stroke-width="1.2"/><ellipse cx="13.5" cy="12.5" rx="1.1" ry="1.9" fill="none" stroke="#10205a" stroke-width="1.1"/></svg>
<div class="t" style="left:131px;top:323px;font-size:12px"><span style="letter-spacing:-0.203px">FiscalPrinterException.class</span></div>
<svg style="left:98px;top:348px" width="7" height="9"><path d="M0.5 0.5V7.5L4.5 4Z" fill="#fff" stroke="#999" stroke-width="1"/></svg>
<svg style="left:110px;top:341px" width="17" height="16" viewBox="0 0 17 16"><path d="M4.5 3.5h5.5l3 3v9h-8.5z" fill="#f4f6fb" stroke="#a08a5a"/><path d="M10 3.5v3h3" fill="#f0d8a0" stroke="#c0a060"/><path d="M5 1v5q0 1.5-1.5 1.5h-1" fill="none" stroke="#3a6cb8" stroke-width="1.7"/><rect x="5.5" y="9.5" width="10.5" height="6" fill="#f4f6fb"/><ellipse cx="7.5" cy="12.5" rx="1.1" ry="1.9" fill="none" stroke="#10205a" stroke-width="1.1"/><path d="M10.5 10.3v4.4" stroke="#10205a" stroke-width="1.2"/><ellipse cx="13.5" cy="12.5" rx="1.1" ry="1.9" fill="none" stroke="#10205a" stroke-width="1.1"/></svg>
<div class="t" style="left:131px;top:341px;font-size:12px"><span style="letter-spacing:-0.388px">FiscalResponse.class</span></div>
<svg style="left:98px;top:366px" width="7" height="9"><path d="M0.5 0.5V7.5L4.5 4Z" fill="#fff" stroke="#999" stroke-width="1"/></svg>
<svg style="left:110px;top:359px" width="17" height="16" viewBox="0 0 17 16"><path d="M4.5 3.5h5.5l3 3v9h-8.5z" fill="#f4f6fb" stroke="#a08a5a"/><path d="M10 3.5v3h3" fill="#f0d8a0" stroke="#c0a060"/><path d="M5 1v5q0 1.5-1.5 1.5h-1" fill="none" stroke="#3a6cb8" stroke-width="1.7"/><rect x="5.5" y="9.5" width="10.5" height="6" fill="#f4f6fb"/><ellipse cx="7.5" cy="12.5" rx="1.1" ry="1.9" fill="none" stroke="#10205a" stroke-width="1.1"/><path d="M10.5 10.3v4.4" stroke="#10205a" stroke-width="1.2"/><ellipse cx="13.5" cy="12.5" rx="1.1" ry="1.9" fill="none" stroke="#10205a" stroke-width="1.1"/></svg>
<div class="t" style="left:131px;top:359px;font-size:12px"><span style="letter-spacing:-0.634px">FPBase.class</span></div>
<svg style="left:78px;top:384px" width="6" height="6"><path d="M6 0V6H0Z" fill="#404040"/></svg>
<svg style="left:91px;top:377px" width="16" height="16" viewBox="0 0 16 16"><rect x="3.5" y="4.5" width="10" height="10" fill="#e8b482" stroke="#a8642a"/><rect x="4.5" y="5.5" width="3" height="3" fill="#fae2c4"/><rect x="9.5" y="5.5" width="3" height="3" fill="#fae2c4"/><rect x="4.5" y="10.5" width="3" height="3" fill="#fae2c4"/><rect x="9.5" y="10.5" width="3" height="3" fill="#fae2c4"/><path d="M8.5 3V16M2 9.5H15" stroke="#a8642a" stroke-width="1"/></svg>
<div class="t" style="left:112px;top:377px;font-size:12px"><span style="letter-spacing:0.063px">com.datecs.fiscalprinter.rou</span></div>
<svg style="left:97px;top:402px" width="6" height="6"><path d="M6 0V6H0Z" fill="#404040"/></svg>
<svg style="left:110px;top:395px" width="17" height="16" viewBox="0 0 17 16"><path d="M4.5 3.5h5.5l3 3v9h-8.5z" fill="#f4f6fb" stroke="#a08a5a"/><path d="M10 3.5v3h3" fill="#f0d8a0" stroke="#c0a060"/><path d="M5 1v5q0 1.5-1.5 1.5h-1" fill="none" stroke="#3a6cb8" stroke-width="1.7"/><rect x="5.5" y="9.5" width="10.5" height="6" fill="#f4f6fb"/><ellipse cx="7.5" cy="12.5" rx="1.1" ry="1.9" fill="none" stroke="#10205a" stroke-width="1.1"/><path d="M10.5 10.3v4.4" stroke="#10205a" stroke-width="1.2"/><ellipse cx="13.5" cy="12.5" rx="1.1" ry="1.9" fill="none" stroke="#10205a" stroke-width="1.1"/></svg>
<div class="t" style="left:131px;top:395px;font-size:12px"><span style="letter-spacing:-0.581px">DP25ROU.class</span></div>
<svg style="left:116px;top:420px" width="6" height="6"><path d="M6 0V6H0Z" fill="#404040"/></svg>
<svg style="left:129px;top:413px" width="16" height="16" viewBox="0 0 16 16"><circle cx="7.5" cy="7.5" r="6.5" fill="#3f9a50" stroke="#2d7a3a"/><path d="M10.3 5.6A3.2 3.2 0 1 0 10.3 9.4" fill="none" stroke="#fff" stroke-width="2.2"/></svg>
<div class="t" style="left:150px;top:413px;font-size:12px"><span style="letter-spacing:-0.766px">DP25ROU</span></div>
<svg style="left:148px;top:431px" width="16" height="16" viewBox="0 0 16 16"><rect x="6" y="7" width="6" height="6" fill="#c44862"/><rect x="8" y="9" width="2" height="2" fill="#fff"/><rect x="7.5" y="8.5" width="3" height="3" fill="none" stroke="#f0c8d0" stroke-width="0.5"/></svg>
<div class="t" style="left:169px;top:431px;font-size:12px"><span style="letter-spacing:0.312px">BuildNumber</span></div>
<svg style="left:148px;top:449px" width="16" height="16" viewBox="0 0 16 16"><rect x="6" y="7" width="6" height="6" fill="#c44862"/><rect x="8" y="9" width="2" height="2" fill="#fff"/><rect x="7.5" y="8.5" width="3" height="3" fill="none" stroke="#f0c8d0" stroke-width="0.5"/></svg>
<div class="t" style="left:169px;top:449px;font-size:12px"><span style="letter-spacing:0.275px">countryCode</span></div>
<svg style="left:148px;top:467px" width="16" height="16" viewBox="0 0 16 16"><rect x="6" y="7" width="6" height="6" fill="#c44862"/><rect x="8" y="9" width="2" height="2" fill="#fff"/><rect x="7.5" y="8.5" width="3" height="3" fill="none" stroke="#f0c8d0" stroke-width="0.5"/></svg>
<div class="t" style="left:169px;top:467px;font-size:12px"><span style="letter-spacing:0.171px">defaultOpCode</span></div>
<svg style="left:148px;top:485px" width="16" height="16" viewBox="0 0 16 16"><rect x="6" y="7" width="6" height="6" fill="#c44862"/><rect x="8" y="9" width="2" height="2" fill="#fff"/><rect x="7.5" y="8.5" width="3" height="3" fill="none" stroke="#f0c8d0" stroke-width="0.5"/></svg>
<div class="t" style="left:169px;top:485px;font-size:12px"><span style="letter-spacing:-0.128px">defaultOpPass</span></div>
<svg style="left:148px;top:503px" width="16" height="16" viewBox="0 0 16 16"><rect x="6" y="7" width="6" height="6" fill="#c44862"/><rect x="8" y="9" width="2" height="2" fill="#fff"/><rect x="7.5" y="8.5" width="3" height="3" fill="none" stroke="#f0c8d0" stroke-width="0.5"/></svg>
<div class="t" style="left:169px;top:503px;font-size:12px"><span style="letter-spacing:0.311px">defaultTillNumber</span></div>
<svg style="left:148px;top:521px" width="16" height="16" viewBox="0 0 16 16"><rect x="6" y="7" width="6" height="6" fill="#c44862"/><rect x="8" y="9" width="2" height="2" fill="#fff"/><rect x="7.5" y="8.5" width="3" height="3" fill="none" stroke="#f0c8d0" stroke-width="0.5"/></svg>
<div class="t" style="left:169px;top:521px;font-size:12px"><span style="letter-spacing:-0.143px">deviceDealerCode</span></div>
<svg style="left:148px;top:539px" width="16" height="16" viewBox="0 0 16 16"><rect x="6" y="7" width="6" height="6" fill="#c44862"/><rect x="8" y="9" width="2" height="2" fill="#fff"/><rect x="7.5" y="8.5" width="3" height="3" fill="none" stroke="#f0c8d0" stroke-width="0.5"/></svg>
<div class="t" style="left:169px;top:539px;font-size:12px"><span style="letter-spacing:0.088px">deviceName</span></div>
<svg style="left:148px;top:557px" width="16" height="16" viewBox="0 0 16 16"><rect x="6" y="7" width="6" height="6" fill="#c44862"/><rect x="8" y="9" width="2" height="2" fill="#fff"/><rect x="7.5" y="8.5" width="3" height="3" fill="none" stroke="#f0c8d0" stroke-width="0.5"/></svg>
<div class="t" style="left:169px;top:557px;font-size:12px"><span style="letter-spacing:0.076px">deviceType</span></div>
<svg style="left:148px;top:575px" width="16" height="16" viewBox="0 0 16 16"><rect x="6" y="7" width="6" height="6" fill="#c44862"/><rect x="8" y="9" width="2" height="2" fill="#fff"/><rect x="7.5" y="8.5" width="3" height="3" fill="none" stroke="#f0c8d0" stroke-width="0.5"/></svg>
<div class="t" style="left:169px;top:575px;font-size:12px"><span style="letter-spacing:0.096px">MajorVersion</span></div>
<svg style="left:148px;top:593px" width="16" height="16" viewBox="0 0 16 16"><rect x="6" y="7" width="6" height="6" fill="#c44862"/><rect x="8" y="9" width="2" height="2" fill="#fff"/><rect x="7.5" y="8.5" width="3" height="3" fill="none" stroke="#f0c8d0" stroke-width="0.5"/></svg>
<div class="t" style="left:169px;top:593px;font-size:12px"><span style="letter-spacing:0.336px">modelType</span></div>
<svg style="left:148px;top:611px" width="16" height="16" viewBox="0 0 16 16"><rect x="6" y="7" width="6" height="6" fill="#c44862"/><rect x="8" y="9" width="2" height="2" fill="#fff"/><rect x="7.5" y="8.5" width="3" height="3" fill="none" stroke="#f0c8d0" stroke-width="0.5"/></svg>
<div class="t" style="left:169px;top:611px;font-size:12px"><span style="letter-spacing:0.103px">serialNumber</span></div>
<svg style="left:148px;top:629px" width="18" height="16" viewBox="0 0 18 16"><circle cx="8" cy="10" r="3.8" fill="#6cb66c" stroke="#3a8a3a"/><text x="10.5" y="6" font-family="Liberation Sans" font-size="10" font-weight="bold" fill="#108020">c</text></svg>
<div class="t" style="left:169px;top:629px;font-size:12px"><span style="letter-spacing:-0.169px">DP25ROU(InputStream, OutputStream)</span></div>
<svg style="left:148px;top:647px" width="16" height="16" viewBox="0 0 16 16"><path d="M4.5 10.5l3.5-4l4 4l-3.5 4z" fill="#f6d46a" stroke="#c0a040"/><path d="M8.5 14.5l3-3.5l3.5 3.5z" fill="#fff" stroke="#6040a0"/></svg>
<div class="t" style="left:169px;top:647px;font-size:12px"><span style="letter-spacing:-0.626px">CHECK_STATUS()</span><span class="r" style="letter-spacing:0.012px"> : void</span></div>
<svg style="left:148px;top:665px" width="16" height="16" viewBox="0 0 16 16"><circle cx="8" cy="10" r="3.8" fill="#6cb66c" stroke="#3a8a3a"/></svg>
<div class="t" style="left:169px;top:665px;font-size:12px"><span style="letter-spacing:-0.148px">checkAndResolve()</span><span class="r" style="letter-spacing:-0.003px"> : boolean</span></div>
<svg style="left:148px;top:683px" width="16" height="16" viewBox="0 0 16 16"><circle cx="8" cy="10" r="3.8" fill="#6cb66c" stroke="#3a8a3a"/></svg>
<div class="t" style="left:169px;top:683px;font-size:12px"><span style="letter-spacing:-0.199px">closeFiscalCheck()</span><span class="r" style="letter-spacing:-0.425px"> : FiscalResponse</span></div>
<svg style="left:148px;top:701px" width="16" height="16" viewBox="0 0 16 16"><circle cx="8" cy="10" r="3.8" fill="#6cb66c" stroke="#3a8a3a"/></svg>
<div class="t" style="left:169px;top:701px;font-size:12px"><span style="letter-spacing:-0.067px">command100Variant0Version0(String)</span><span class="r" style="letter-spacing:-0.406px"> : FiscalResponse</span></div>
<svg style="left:1635px;top:107px" width="16" height="16" viewBox="0 0 16 16"><rect x="3.5" y="4.5" width="10" height="10" fill="#cac69e" stroke="#8a865a"/><rect x="4.5" y="5.5" width="3" height="3" fill="#e8e6cc"/><rect x="9.5" y="5.5" width="3" height="3" fill="#e8e6cc"/><rect x="4.5" y="10.5" width="3" height="3" fill="#e8e6cc"/><rect x="9.5" y="10.5" width="3" height="3" fill="#e8e6cc"/><path d="M8.5 3V16M2 9.5H15" stroke="#8a865a" stroke-width="1"/></svg>
<div class="t" style="left:1663px;top:107px;letter-spacing:-0.168px;">dp05</div>
<div class="a" style="left:1633px;top:125px;width:58px;height:18px;border:1px solid #d9d9d9;border-radius:3px;background:linear-gradient(#fbfbfb,#e6e6e6)"></div>
<svg style="left:1619px;top:132px" width="6" height="6"><path d="M6 0V6H0Z" fill="#404040"/></svg>
<svg style="left:1635px;top:125px" width="16" height="16" viewBox="0 0 16 16"><circle cx="7.5" cy="7.5" r="6.5" fill="#3f9a50" stroke="#2d7a3a"/><path d="M10.3 5.6A3.2 3.2 0 1 0 10.3 9.4" fill="none" stroke="#fff" stroke-width="2.2"/></svg>
<div class="t" style="left:1663px;top:125px;letter-spacing:-0.168px;">dp05</div>
<svg style="left:1660px;top:143px" width="18" height="16" viewBox="0 0 18 16"><circle cx="8" cy="10" r="3.8" fill="#6cb66c" stroke="#3a8a3a"/><text x="16" y="7" font-family="Liberation Sans" font-size="10" font-weight="bold" fill="#108020">c</text></svg>
<div class="t" style="left:1688px;top:143px;letter-spacing:-0.076px;">dp05(InputStream, OutputStream)</div>
<div class="a" style="left:638px;top:107px;width:12px;height:614px;background:#f8f8f8"></div>
<div class="a" style="left:667px;top:105px;width:1px;height:616px;background:#f3f3f3"></div>
<div class="a" style="left:638px;top:332px;width:12px;height:241px;background:repeating-conic-gradient(#3b88dc 0 25%,#d4e8fa 0 50%) 0 0/2px 2px"></div>
<svg style="left:657px;top:140px" width="11" height="11" viewBox="0 0 11 11"><circle cx="5" cy="5" r="4.5" fill="#f4f6fa" stroke="#a4b4cc"/><path d="M2.5 5h5" stroke="#7a8aa8" stroke-width="1.2"/></svg>
<svg style="left:657px;top:455px" width="11" height="11" viewBox="0 0 11 11"><circle cx="5" cy="5" r="4.5" fill="#f4f6fa" stroke="#a4b4cc"/><path d="M2.5 5h5" stroke="#7a8aa8" stroke-width="1.2"/></svg>
<svg style="left:638px;top:497px" width="13" height="15" viewBox="0 0 13 15"><rect x="0.5" y="2.5" width="11" height="11.5" fill="#fff" stroke="#b89a70"/><rect x="3.5" y="0.5" width="5" height="3" fill="#b0b8c8"/><path d="M1.5 9l2.5 3l4-6" stroke="#1a5ab0" stroke-width="1.6" fill="none"/><path d="M8 10h2.5" stroke="#606060"/></svg>
<div class="a" style="left:668px;top:422px;width:886px;height:15px;background:#e8f2fe"></div>
<div class="a" style="left:796px;top:422px;width:105px;height:15px;background:#3399ff"></div>
<div class="a" style="left:1554px;top:107px;width:16px;height:614px;background:#eeeeee"></div>
<svg style="left:1558px;top:114px" width="8" height="5"><path d="M0 4.5L4 0.5L8 4.5z" fill="#a0a0a0"/></svg>
<div class="a" style="left:1570px;top:107px;width:13px;height:614px;background:#f8f8f8"></div>
<div class="a" style="left:1572px;top:502px;width:10px;height:5px;background:#9cc8f0;border:1px solid #3c80c0"></div>
<div class="c" style="left:670px;top:109px"><span class="k">package</span> dp05;</div>
<div class="c" style="left:670px;top:139px"><span class="k">import</span> java.io.IOException;</div>
<div class="c" style="left:670px;top:154px"><span class="k">import</span> java.io.InputStream;</div>
<div class="c" style="left:670px;top:169px"><span class="k">import</span> java.io.OutputStream;</div>
<div class="c" style="left:670px;top:199px"><span class="k">import</span> com.datecs.fiscalprinter.FiscalPrinterException;</div>
<div class="c" style="left:670px;top:214px"><span class="k">import</span> com.datecs.fiscalprinter.rou.DP25ROU;</div>
<div class="c" style="left:670px;top:244px"><span class="k">import</span> anywheresoftware.b4a.BA.ActivityObject;</div>
<div class="c" style="left:670px;top:259px"><span class="k">import</span> anywheresoftware.b4a.BA.DependsOn;</div>
<div class="c" style="left:670px;top:274px"><span class="k">import</span> anywheresoftware.b4a.BA.Permissions;</div>
<div class="c" style="left:670px;top:289px"><span class="k">import</span> anywheresoftware.b4a.BA.ShortName;</div>
<div class="c" style="left:670px;top:304px"><span class="k">import</span> anywheresoftware.b4a.BA.Version;</div>
<div class="c" style="left:670px;top:334px"><span class="an">@Version</span>(1.0f)</div>
<div class="c" style="left:670px;top:349px"><span class="an">@Permissions</span>(values={<span class="s">&quot;android.permision.INTERNET&quot;</span>})</div>
<div class="c" style="left:670px;top:364px"><span class="an">@ShortName</span>(<span class="s">&quot;dp05&quot;</span>)</div>
<div class="c" style="left:670px;top:379px"><span class="an">@DependsOn</span>(values={<span class="s">&quot;dp05&quot;</span>})</div>
<div class="c" style="left:670px;top:394px"><span class="an">@ActivityObject</span></div>
<div class="c" style="left:670px;top:424px"><span class="k">public</span> <span class="k">class</span> dp05 <span style="color:#fff;font-weight:bold">extends</span><span style="color:#fff"> DP25ROU</span>{</div>
<div class="c" style="left:670px;top:454px">    <span class="k">public</span> dp05(InputStream mIn, OutputStream mOut) <span class="k">throws</span> IOException,</div>
<div class="c" style="left:670px;top:469px">            FiscalPrinterException, IllegalArgumentException {</div>
<div class="c" style="left:670px;top:484px">        <span class="k">super</span>(mIn, mOut);</div>
<div class="c" style="left:670px;top:499px">        <span class="cm">// </span><span class="td">TODO</span><span class="cm"> Auto-generated constructor stub</span></div>
<div class="c" style="left:670px;top:514px">    }</div>
<div class="c" style="left:670px;top:559px">}</div>
</body></html>
